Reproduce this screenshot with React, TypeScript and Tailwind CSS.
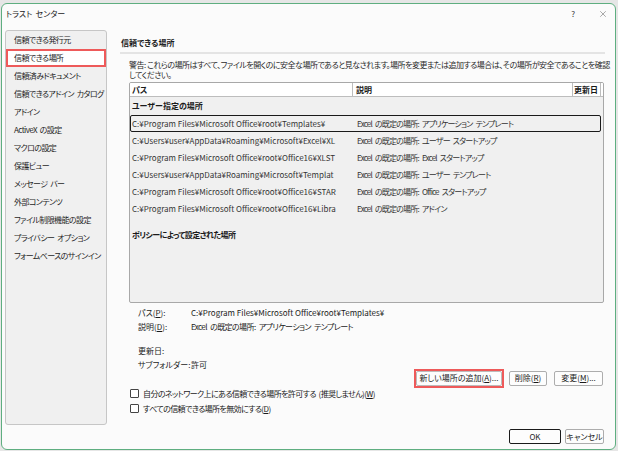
import React from 'react';
import { X } from 'lucide-react';

const navItems = [
  '信頼できる発行元',
  '信頼できる場所',
  '信頼済みドキュメント',
  '信頼できるアドイン カタログ',
  'アドイン',
  'ActiveX の設定',
  'マクロの設定',
  '保護ビュー',
  'メッセージ バー',
  '外部コンテンツ',
  'ファイル制限機能の設定',
  'プライバシー オプション',
  'フォームベースのサインイン',
];

const rows = [
  ['C:¥Program Files¥Microsoft Office¥root¥Templates¥', 'Excel の既定の場所: アプリケーション テンプレート'],
  ['C:¥Users¥user¥AppData¥Roaming¥Microsoft¥Excel¥XL', 'Excel の既定の場所: ユーザー スタートアップ'],
  ['C:¥Program Files¥Microsoft Office¥root¥Office16¥XLST', 'Excel の既定の場所: Excel スタートアップ'],
  ['C:¥Users¥user¥AppData¥Roaming¥Microsoft¥Templat', 'Excel の既定の場所: ユーザー テンプレート'],
  ['C:¥Program Files¥Microsoft Office¥root¥Office16¥STAR', 'Excel の既定の場所: Office スタートアップ'],
  ['C:¥Program Files¥Microsoft Office¥root¥Office16¥Libra', 'Excel の既定の場所: アドイン'],
];

// mnemonic letter with underline, like (P)
const Key = ({ k }: { k: string }) => (
  <>
    (<span className="underline">{k}</span>)
  </>
);

const Button = ({ children, className = '' }: { children: React.ReactNode; className?: string }) => (
  <div
    className={`h-[15px] flex items-center justify-center border border-[#adadad] bg-[#fdfdfd] rounded-[2px] text-[#1a1a1a] whitespace-nowrap ${className}`}
  >
    {children}
  </div>
);

const Checkbox = ({ children }: { children: React.ReactNode }) => (
  <div className="h-[15px] flex items-center">
    <div className="w-[9px] h-[9px] border border-[#444] rounded-[1px] bg-white" />
    <span className="ml-[4px] text-[#1a1a1a] whitespace-nowrap tracking-[-0.6px] [word-spacing:1.5px]">{children}</span>
  </div>
);

export default function App() {
  return (
    <div
      className="w-[618px] h-[451px] bg-[#e6e6e6] pt-[3px] pl-[1px] pr-[2px] pb-[1px] text-[8px] leading-[12px] text-[#1f1f1f] overflow-hidden [font-feature-settings:'palt']"
      style={{ fontFamily: '"Noto Sans CJK JP", "Noto Sans", sans-serif' }}
    >
      <div className="h-full border border-[#5eae80] rounded-[6px] bg-[#fbfbfb] flex flex-col">
        {/* title bar */}
        <div className="h-[20px] flex items-center pl-[4px] pr-[7px]">
          <span className="text-[#1a1a1a] [word-spacing:1.5px]">トラスト センター</span>
          <div className="ml-auto flex items-center">
            <span className="text-[#333]">?</span>
            <X size={10} strokeWidth={1} className="ml-[23px] text-[#333]" />
          </div>
        </div>

        {/* body */}
        <div className="flex mt-[6px] h-[395px]">
          {/* nav */}
          <div className="ml-[3px] w-[102px] h-full bg-[#f0f0f0] border border-[#c6c6c6] rounded-[3px] tracking-[-0.6px] [word-spacing:1.5px]">
            {navItems.map((item, i) => (
              <div
                key={item}
                className={
                  i === 1
                    ? 'h-[18px] flex items-center pl-[6px] border-2 border-[#ee5a5a] bg-white whitespace-nowrap'
                    : 'h-[18px] flex items-center pl-[8px] whitespace-nowrap'
                }
              >
                {item}
              </div>
            ))}
          </div>

          {/* right panel */}
          <div className="ml-[13px] w-[485px] flex flex-col">
            <div className="h-[24px] pt-[7px] border-b-2 border-[#e4e4e4] pl-[1px] font-semibold text-[#1a1a1a]">
              信頼できる場所
            </div>

            <div className="pl-[9px] pr-[1px]">
              <div className="mt-[6px] leading-[10px] text-[#2a2a2a] whitespace-nowrap tracking-[-0.5px]">
                <div>警告: これらの場所はすべて、ファイルを開くのに安全な場所であると見なされます。場所を変更または追加する場合は、その場所が安全であることを確認</div>
                <div>してください。</div>
              </div>

              {/* table */}
              <div className="mt-[2px] h-[221px] border border-[#a8a8a8] rounded-[2px] bg-[#f0f0f0] overflow-hidden">
                <div className="h-[14px] flex bg-white border-b border-[#bdbdbd] font-semibold text-[#1a1a1a]">
                  <div className="w-[223px] pl-[2px] border-r border-[#bdbdbd] flex items-center">パス</div>
                  <div className="w-[220px] pl-[3px] border-r border-[#bdbdbd] flex items-center">説明</div>
                  <div className="w-[28px] pl-[1px] border-r border-[#bdbdbd] flex items-center whitespace-nowrap overflow-hidden">更新日</div>
                </div>
                <div className="h-[18px] flex items-center pl-[2px] font-semibold text-[#1a1a1a]">ユーザー指定の場所</div>
                {rows.map(([path, desc], i) => (
                  <div
                    key={path}
                    className={
                      i === 0
                        ? 'h-[17px] mr-[2px] flex items-center border border-[#1a1a1a] rounded-[2px] text-[#333]'
                        : 'h-[17px] mr-[2px] flex items-center border border-transparent text-[#333]'
                    }
                  >
                    <div className="w-[222px] shrink-0 pl-[1px] whitespace-nowrap overflow-hidden">{path}</div>
                    <div className="pl-[4px] whitespace-nowrap tracking-[-0.8px] [word-spacing:2px]">{desc}</div>
                  </div>
                ))}
                <div className="mt-[10px] h-[16px] flex items-center pl-[2px] font-semibold text-[#1a1a1a] tracking-[-0.6px]">
                  ポリシーによって設定された場所
                </div>
              </div>

              {/* details */}
              <div className="mt-[3px] pl-[9px] leading-[14px] text-[#1a1a1a] whitespace-nowrap">
                <div className="flex">
                  <div className="w-[53px] shrink-0">パス<Key k="P" />:</div>
                  <div>C:¥Program Files¥Microsoft Office¥root¥Templates¥</div>
                </div>
                <div className="flex">
                  <div className="w-[53px] shrink-0">説明<Key k="D" />:</div>
                  <div className="tracking-[-0.6px] [word-spacing:2px]">Excel の既定の場所: アプリケーション テンプレート</div>
                </div>
                <div className="flex mt-[10px]">
                  <div className="w-[53px] shrink-0">更新日:</div>
                </div>
                <div className="flex">
                  <div className="w-[53px] shrink-0">サブフォルダー:</div>
                  <div>許可</div>
                </div>
              </div>

              <div className="-mt-[2px] flex justify-end items-center h-[16px] pr-[1px]">
                <div className="border-2 border-[#ee5a5a]">
                  <Button className="w-[86px] border-[#bcbcbc]">
                    新しい場所の追加<Key k="A" />...
                  </Button>
                </div>
                <Button className="ml-[5px] w-[38px]">
                  削除<Key k="R" />
                </Button>
                <Button className="ml-[7px] w-[49px]">
                  変更<Key k="M" />...
                </Button>
              </div>

              <div className="pl-[1px]">
                <Checkbox>
                  自分のネットワーク上にある信頼できる場所を許可する (推奨しません)<Key k="W" />
                </Checkbox>
                <Checkbox>
                  すべての信頼できる場所を無効にする<Key k="D" />
                </Checkbox>
              </div>
            </div>
          </div>
        </div>

        {/* footer */}
        <div className="mt-[4px] flex justify-end pr-[11px]">
          <div className="w-[52px] h-[15px] flex items-center justify-center border-[1.5px] border-[#1a1a1a] rounded-[2px] bg-[#fdfdfd]">
            OK
          </div>
          <Button className="ml-[4px] w-[39px]">キャンセル</Button>
        </div>
      </div>
    </div>
  );
}
